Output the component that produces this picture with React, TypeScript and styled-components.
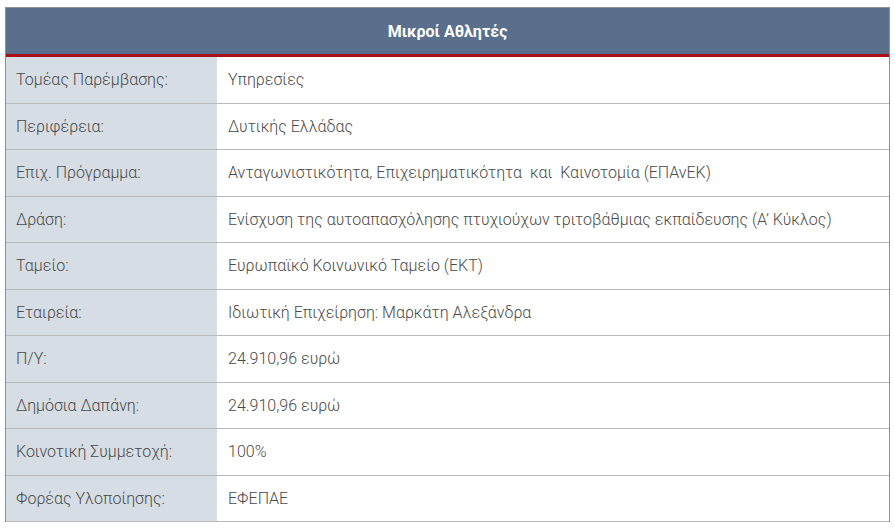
import React from 'react';
import styled, { createGlobalStyle } from 'styled-components';

const GlobalStyle = createGlobalStyle`
  body {
    margin: 0;
    background: #fff;
    font-family: Roboto, 'Liberation Sans', sans-serif;
  }
`;

const rows: [string, string][] = [
  ['Τομέας Παρέμβασης:', 'Υπηρεσίες'],
  ['Περιφέρεια:', 'Δυτικής Ελλάδας'],
  ['Επιχ. Πρόγραμμα:', 'Ανταγωνιστικότητα, Επιχειρηματικότητα  και  Καινοτομία (ΕΠΑνΕΚ)'],
  ['Δράση:', 'Ενίσχυση της αυτοαπασχόλησης πτυχιούχων τριτοβάθμιας εκπαίδευσης (Α’ Κύκλος)'],
  ['Ταμείο:', 'Ευρωπαϊκό Κοινωνικό Ταμείο (ΕΚΤ)'],
  ['Εταιρεία:', 'Ιδιωτική Επιχείρηση: Μαρκάτη Αλεξάνδρα'],
  ['Π/Υ:', '24.910,96 ευρώ'],
  ['Δημόσια Δαπάνη:', '24.910,96 ευρώ'],
  ['Κοινοτική Συμμετοχή:', '100%'],
  ['Φορέας Υλοποίησης:', 'ΕΦΕΠΑΕ'],
];

const App = () => (
  <Page>
    <GlobalStyle />
    <Table>
      <Header>Μικροί Αθλητές</Header>
      {rows.map(([label, value]) => (
        <Row key={label}>
          <Label>{label}</Label>
          <Value>{value}</Value>
        </Row>
      ))}
    </Table>
  </Page>
);

export default App;

const Page = styled.div`
  padding: 7px 5px 0 5px;
`;

const Table = styled.div`
  width: 885px;
  border-left: 1px solid #8f8f8f;
  border-right: 1px solid #8f8f8f;
  border-top: 1px solid #8f8f8f;
  box-sizing: border-box;
`;

const Header = styled.div`
  height: 46px;
  background: #5a6f8b;
  border-bottom: 3px solid #a80f13;
  color: #fff;
  font-weight: 700;
  font-size: 16px;
  display: flex;
  align-items: center;
  justify-content: center;
`;

const Row = styled.div`
  display: grid;
  grid-template-columns: 211px 1fr;
  height: 46.5px;
  box-sizing: border-box;
  border-bottom: 1px solid #b9b9b9;
  font-size: 16px;
  font-weight: 300;
  color: #4a4a4a;
`;

const Label = styled.div`
  background: #d6dde5;
  padding-left: 10px;
  display: flex;
  align-items: center;
`;

const Value = styled.div`
  padding-left: 11px;
  display: flex;
  align-items: center;
  white-space: pre;
`;
